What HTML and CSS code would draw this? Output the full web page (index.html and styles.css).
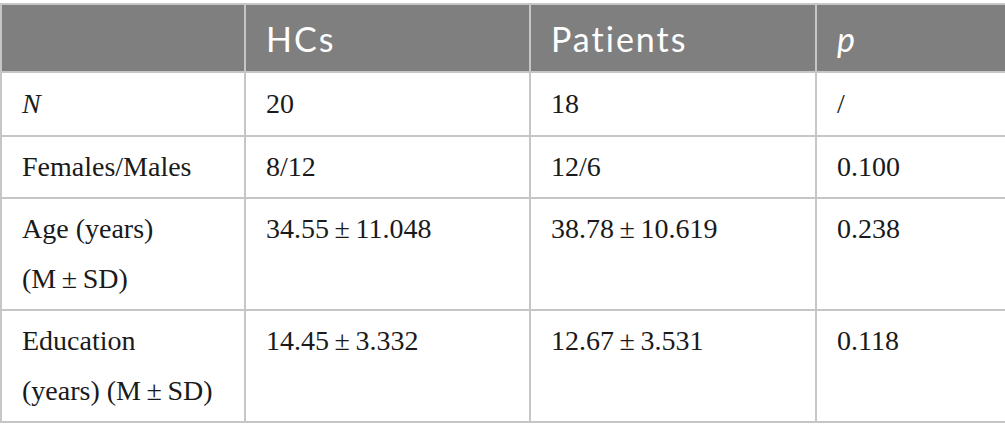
FILE: index.html
```html
<!DOCTYPE html>
<html>
<head>
<meta charset="utf-8">
<link rel="stylesheet" href="styles.css">
</head>
<body>
<table class="tbl">
  <colgroup>
    <col class="c1"><col class="c2"><col class="c3"><col class="c4">
  </colgroup>
  <thead>
    <tr>
      <th></th>
      <th>HCs</th>
      <th>Patients</th>
      <th><i>p</i></th>
    </tr>
  </thead>
  <tbody>
    <tr>
      <td class="first"><i>N</i></td>
      <td class="first">20</td>
      <td class="first">18</td>
      <td class="first">/</td>
    </tr>
    <tr>
      <td>Females/Males</td>
      <td>8/12</td>
      <td>12/6</td>
      <td>0.100</td>
    </tr>
    <tr>
      <td>Age (years)<br>(M&#8201;±&#8201;SD)</td>
      <td>34.55&#8201;±&#8201;11.048</td>
      <td>38.78&#8201;±&#8201;10.619</td>
      <td>0.238</td>
    </tr>
    <tr>
      <td>Education<br>(years) (M&#8201;±&#8201;SD)</td>
      <td>14.45&#8201;±&#8201;3.332</td>
      <td>12.67&#8201;±&#8201;3.531</td>
      <td>0.118</td>
    </tr>
  </tbody>
</table>
</body>
</html>
```
FILE: styles.css
```css
html, body {
  margin: 0;
  padding: 0;
  background: #ffffff;
}
body {
  padding-top: 3px;
}
.tbl {
  border-collapse: collapse;
  width: 1005px;
  table-layout: fixed;
  color: #1a1a1a;
}
.c1 { width: 244px; }
.c2 { width: 285px; }
.c3 { width: 286px; }
.c4 { width: 190px; }
.tbl th, .tbl td {
  border: 2px solid #c6c6c6;
  text-align: left;
  vertical-align: top;
  padding: 5px 10px 5px 20px;
  line-height: 50px;
}
.tbl th {
  background: #7f7f7f;
  color: #ffffff;
  font-family: Lato, "Open Sans", sans-serif;
  font-weight: 400;
  font-size: 34px;
  letter-spacing: 2px;
  padding-top: 9px;
  padding-bottom: 7px;
}
.tbl td {
  font-family: "Liberation Serif", "Times New Roman", serif;
  font-size: 28px;
}
.tbl td.first {
  padding-top: 6px;
  padding-bottom: 6px;
}
```
